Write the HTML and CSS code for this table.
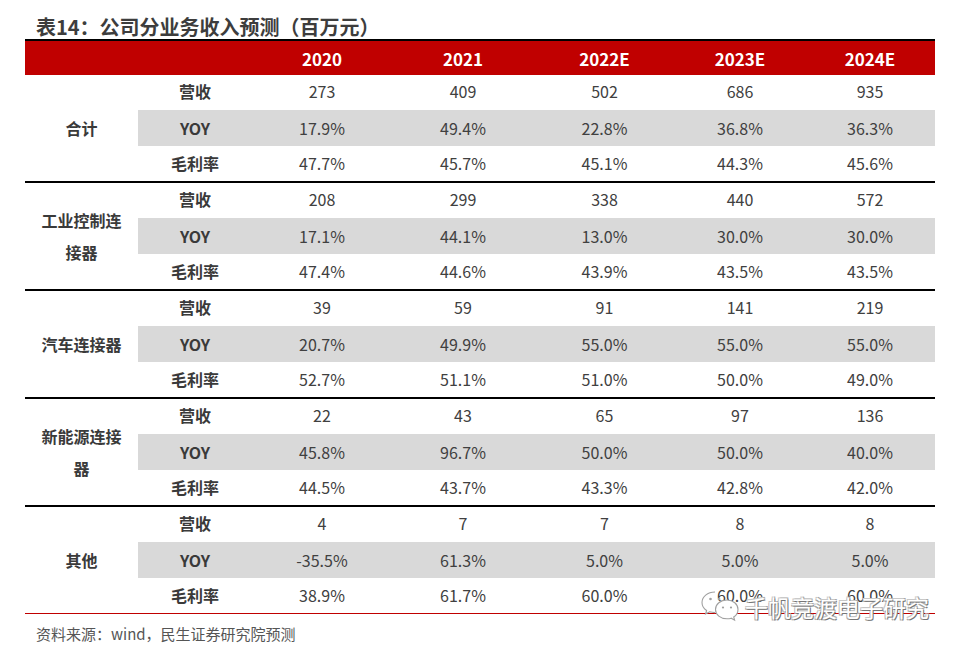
FILE: index.html
```html
<!DOCTYPE html>
<html lang="zh">
<head>
<meta charset="utf-8">
<link rel="stylesheet" href="styles.css">
</head>
<body>
<div class="page">
  <h1 class="title">表14：公司分业务收入预测（百万元）</h1>
  <table class="tbl">
    <colgroup>
      <col class="c-grp"><col class="c-met"><col class="c1"><col class="c2"><col class="c3"><col class="c4"><col class="c5">
    </colgroup>
    <thead>
      <tr class="head"><th></th><th></th><th>2020</th><th>2021</th><th>2022E</th><th>2023E</th><th>2024E</th></tr>
    </thead>
    <tbody class="grp">
      <tr class="r1"><td class="gl" rowspan="3">合计</td><td class="ml">营收</td><td>273</td><td>409</td><td>502</td><td>686</td><td>935</td></tr>
      <tr class="r2"><td class="ml">YOY</td><td>17.9%</td><td>49.4%</td><td>22.8%</td><td>36.8%</td><td>36.3%</td></tr>
      <tr class="r3"><td class="ml">毛利率</td><td>47.7%</td><td>45.7%</td><td>45.1%</td><td>44.3%</td><td>45.6%</td></tr>
    </tbody>
    <tbody class="grp">
      <tr class="r1"><td class="gl" rowspan="3">工业控制连<br>接器</td><td class="ml">营收</td><td>208</td><td>299</td><td>338</td><td>440</td><td>572</td></tr>
      <tr class="r2"><td class="ml">YOY</td><td>17.1%</td><td>44.1%</td><td>13.0%</td><td>30.0%</td><td>30.0%</td></tr>
      <tr class="r3"><td class="ml">毛利率</td><td>47.4%</td><td>44.6%</td><td>43.9%</td><td>43.5%</td><td>43.5%</td></tr>
    </tbody>
    <tbody class="grp">
      <tr class="r1"><td class="gl" rowspan="3">汽车连接器</td><td class="ml">营收</td><td>39</td><td>59</td><td>91</td><td>141</td><td>219</td></tr>
      <tr class="r2"><td class="ml">YOY</td><td>20.7%</td><td>49.9%</td><td>55.0%</td><td>55.0%</td><td>55.0%</td></tr>
      <tr class="r3"><td class="ml">毛利率</td><td>52.7%</td><td>51.1%</td><td>51.0%</td><td>50.0%</td><td>49.0%</td></tr>
    </tbody>
    <tbody class="grp">
      <tr class="r1"><td class="gl" rowspan="3">新能源连接<br>器</td><td class="ml">营收</td><td>22</td><td>43</td><td>65</td><td>97</td><td>136</td></tr>
      <tr class="r2"><td class="ml">YOY</td><td>45.8%</td><td>96.7%</td><td>50.0%</td><td>50.0%</td><td>40.0%</td></tr>
      <tr class="r3"><td class="ml">毛利率</td><td>44.5%</td><td>43.7%</td><td>43.3%</td><td>42.8%</td><td>42.0%</td></tr>
    </tbody>
    <tbody class="grp last">
      <tr class="r1"><td class="gl" rowspan="3">其他</td><td class="ml">营收</td><td>4</td><td>7</td><td>7</td><td>8</td><td>8</td></tr>
      <tr class="r2"><td class="ml">YOY</td><td>-35.5%</td><td>61.3%</td><td>5.0%</td><td>5.0%</td><td>5.0%</td></tr>
      <tr class="r3"><td class="ml">毛利率</td><td>38.9%</td><td>61.7%</td><td>60.0%</td><td>60.0%</td><td>60.0%</td></tr>
    </tbody>
  </table>
  <p class="source">资料来源：wind，民生证券研究院预测</p>
  <div class="watermark">
    <svg class="wx" viewBox="0 0 40 36" width="40" height="36" aria-hidden="true">
      <path d="M15 3 C7.5 3 2 7.8 2 13.5 C2 16.8 3.8 19.6 6.6 21.5 L5.6 25 L9.6 22.8 C11.3 23.3 13.1 23.6 15 23.6" fill="#fff" stroke="#a0a0a0" stroke-width="1.1"/>
      <path d="M27 11 C20.5 11 15.5 15.2 15.5 20.4 C15.5 25.6 20.5 29.8 27 29.8 C28.5 29.8 29.9 29.6 31.2 29.2 L34.6 31.2 L33.7 28 C36.3 26.3 38 23.5 38 20.4 C38 15.2 33.2 11 27 11 Z" fill="#fff" stroke="#a0a0a0" stroke-width="1.1"/>
      <circle cx="10.5" cy="10" r="1.3" fill="#a0a0a0"/>
      <circle cx="19" cy="10" r="1.3" fill="#a0a0a0"/>
      <circle cx="23" cy="18.5" r="1.1" fill="#a0a0a0"/>
      <circle cx="31" cy="18.5" r="1.1" fill="#a0a0a0"/>
    </svg>
    <span class="wm-text">千帆竞渡电子研究</span>
  </div>
</div>
</body>
</html>
```
FILE: styles.css
```css
html, body {
  margin: 0;
  padding: 0;
  background: #ffffff;
}
body {
  font-family: "Noto Sans CJK SC", "Noto Sans", sans-serif;
  color: #404040;
}
.page {
  position: relative;
  width: 959px;
  height: 650px;
  padding: 0 0 0 25px;
  box-sizing: border-box;
}
.title {
  margin: 0;
  padding: 14px 0 0 11px;
  height: 25px;
  font-size: 20px;
  line-height: 25px;
  font-weight: 700;
  color: #3d3d3d;
}
.tbl {
  border-collapse: collapse;
  table-layout: fixed;
  width: 910px;
}
.c-grp { width: 113px; }
.c-met { width: 114px; }
.c1 { width: 140px; }
.c2 { width: 142px; }
.c3 { width: 141px; }
.c4 { width: 130px; }
.c5 { width: 130px; }
.head th {
  background: #c00000;
  color: #ffffff;
  height: 34px;
  padding: 0;
  font-size: 17px;
  font-weight: 700;
  border-top: 2px solid #000;
  text-align: center;
}
.tbl td {
  padding: 0;
  text-align: center;
  font-size: 16px;
  color: #404040;
  box-sizing: content-box;
}
.grp { border-bottom: 2px solid #000; }
.grp.last { border-bottom: 1px solid #c00000; }
.r1 td { height: 31px; padding-bottom: 4px; }
.r2 td { height: 36px; background: #d9d9d9; }
.r2 td.gl { background: #ffffff; }
.r3 td { height: 33px; padding-bottom: 2px; }
.tbl td.gl {
  padding: 0;
  line-height: 32px;
}
.tbl td.gl, .tbl td.ml {
  font-weight: 700;
  color: #3a3a3a;
}
.source {
  margin: 0;
  padding: 9px 0 0 11px;
  font-size: 15px;
  line-height: 21px;
  color: #555;
}
.watermark {
  position: absolute;
  left: 700px;
  top: 589px;
  display: flex;
  align-items: center;
  gap: 5px;
}
.wx { display: block; }
.wm-text {
  font-size: 23px;
  font-weight: 400;
  color: #ffffff;
  text-shadow: 1px 1px 0 #777, -1px -1px 0 #c8c8c8, 1px -1px 0 #aaa, -1px 1px 0 #aaa;
  line-height: 30px;
}
```
